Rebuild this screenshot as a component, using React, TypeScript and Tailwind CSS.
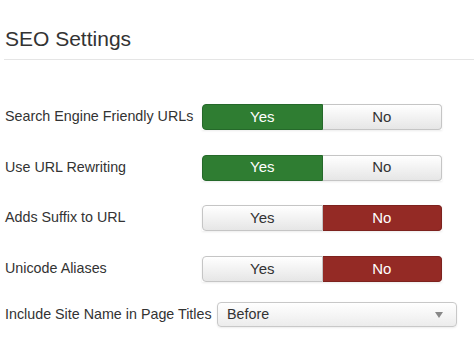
import React from 'react';

type Row = { label: string; value: 'yes' | 'no' };

const rows: Row[] = [
  { label: 'Search Engine Friendly URLs', value: 'yes' },
  { label: 'Use URL Rewriting', value: 'yes' },
  { label: 'Adds Suffix to URL', value: 'no' },
  { label: 'Unicode Aliases', value: 'no' },
];

const plain =
  'bg-gradient-to-b from-white to-[#e6e6e6] text-[#333] border-[#c5c5c5]';

const YesNo: React.FC<{ value: 'yes' | 'no' }> = ({ value }) => (
  <div className="flex w-[240px] h-[26px] text-[15px] shadow-[0_1px_2px_rgba(0,0,0,0.08)]">
    <div
      className={`flex-1 flex items-center justify-center border rounded-l-[4px] ${
        value === 'yes' ? 'bg-[#2f7d32] border-[#25692a] text-white' : plain
      }`}
    >
      Yes
    </div>
    <div
      className={`flex-1 flex items-center justify-center border border-l-0 rounded-r-[4px] ${
        value === 'no' ? 'bg-[#942a25] border-[#7d221e] text-white' : plain
      }`}
    >
      No
    </div>
  </div>
);

export default function App() {
  return (
    <div className="w-[474px] h-[349px] bg-white text-[#333] font-['Liberation_Sans',Arial,sans-serif] overflow-hidden">
      <div className="pl-[5px] pt-[26px]">
        <h2 className="text-[21px] leading-[26px]">SEO Settings</h2>
      </div>
      <div className="ml-[4px] mt-[7px] border-t border-[#e5e5e5]" />

      <div className="pl-[5px] pt-[44px] flex flex-col gap-[24.6px]">
        {rows.map((row) => (
          <div key={row.label} className="flex items-center">
            <div className="w-[197px] text-[14.3px]">{row.label}</div>
            <YesNo value={row.value} />
          </div>
        ))}
        <div className="flex items-center -mt-[4px]">
          <div className="w-[212px] text-[14.3px]">Include Site Name in Page Titles</div>
          <div className="w-[240px] h-[25px] flex items-center justify-between px-[9px] border border-[#c8c8c8] rounded-[4px] bg-gradient-to-b from-white to-[#ececec] shadow-[0_1px_2px_rgba(0,0,0,0.08)] text-[14.3px]">
            <span>Before</span>
            <svg width="8" height="6" viewBox="0 0 8 6" className="mr-[4px]">
              <path d="M0 0 L8 0 L4 6 Z" fill="#888" />
            </svg>
          </div>
        </div>
      </div>
    </div>
  );
}
